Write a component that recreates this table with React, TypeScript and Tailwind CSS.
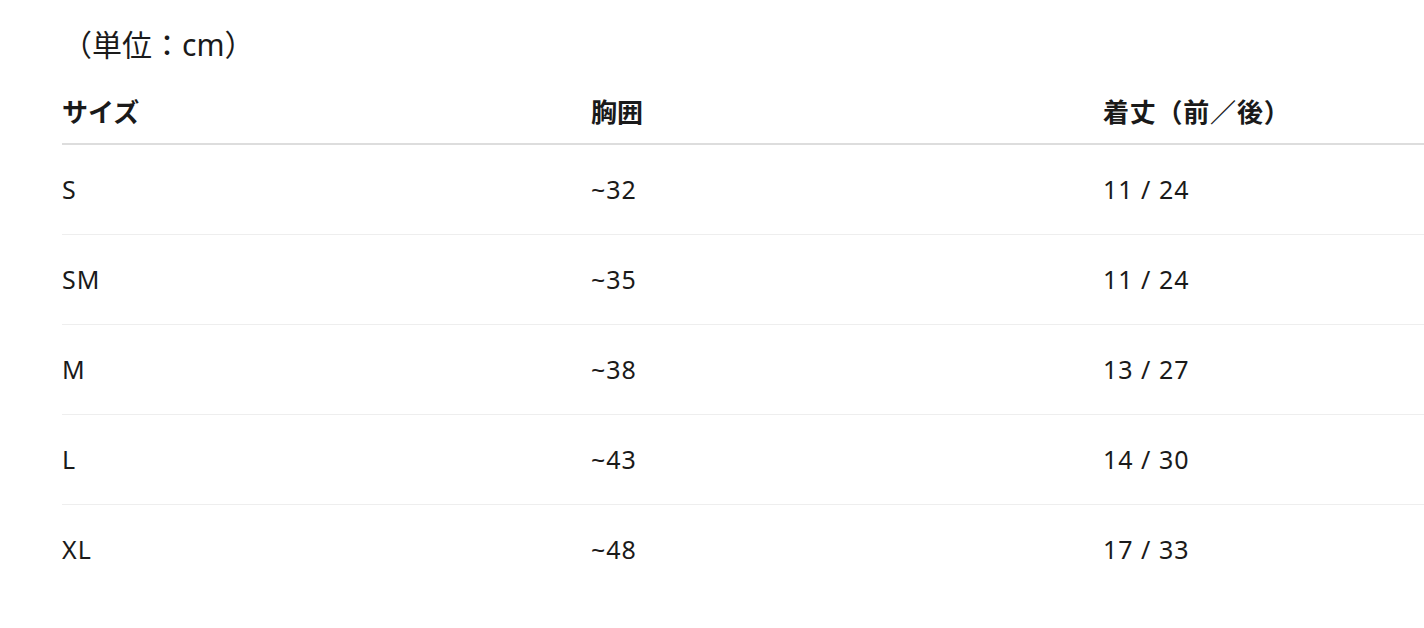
const rows = [
  { size: "S", chest: "~32", length: "11 / 24" },
  { size: "SM", chest: "~35", length: "11 / 24" },
  { size: "M", chest: "~38", length: "13 / 27" },
  { size: "L", chest: "~43", length: "14 / 30" },
  { size: "XL", chest: "~48", length: "17 / 33" },
];

export default function App() {
  return (
    <div
      className="min-h-screen bg-white pl-[62px] text-[#1a1a1a]"
      style={{ fontFamily: '"Noto Sans", "Noto Sans CJK JP", sans-serif' }}
    >
      <p className="pt-[25px] text-[30px] leading-[40px]">（単位：cm）</p>
      <table className="w-full border-collapse text-left">
        <thead>
          <tr className="border-b-2 border-[#dddddd]">
            <th className="w-[529px] pt-[31px] pb-[15px] text-[26px] font-bold leading-[32px]">サイズ</th>
            <th className="w-[512px] pt-[31px] pb-[15px] text-[26px] font-bold leading-[32px]">胸囲</th>
            <th className="pt-[31px] pb-[15px] text-[26px] font-bold leading-[32px] tracking-[0.03em]">着丈（前／後）</th>
          </tr>
        </thead>
        <tbody>
          {rows.map((r, i) => (
            <tr key={r.size} className={i < rows.length - 1 ? "border-b border-[#eeeeee]" : ""}>
              <td className="h-[90px] align-middle text-[25px] leading-[32px] tracking-[0.04em]">{r.size}</td>
              <td className="h-[90px] align-middle text-[25px] leading-[32px] tracking-[0.04em]">{r.chest}</td>
              <td className="h-[90px] align-middle text-[25px] leading-[32px] tracking-[0.04em]">{r.length}</td>
            </tr>
          ))}
        </tbody>
      </table>
    </div>
  );
}
